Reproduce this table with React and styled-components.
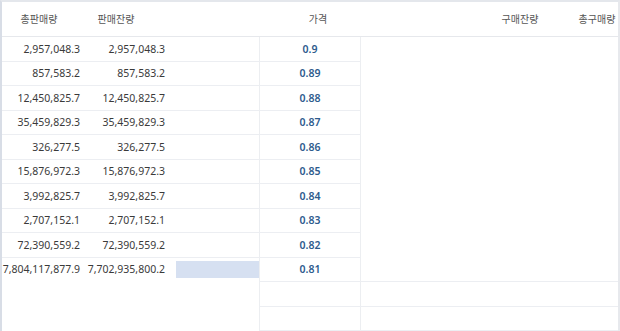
import React from "react";
import styled, { createGlobalStyle } from "styled-components";

const asks = [
  { total: 2957048.3, remain: 2957048.3, price: "0.9" },
  { total: 857583.2, remain: 857583.2, price: "0.89" },
  { total: 12450825.7, remain: 12450825.7, price: "0.88" },
  { total: 35459829.3, remain: 35459829.3, price: "0.87" },
  { total: 326277.5, remain: 326277.5, price: "0.86" },
  { total: 15876972.3, remain: 15876972.3, price: "0.85" },
  { total: 3992825.7, remain: 3992825.7, price: "0.84" },
  { total: 2707152.1, remain: 2707152.1, price: "0.83" },
  { total: 72390559.2, remain: 72390559.2, price: "0.82" },
  { total: 7804117877.9, remain: 7702935800.2, price: "0.81" },
];

const BAR_MAX = 83;

const fmt = (n) =>
  n.toLocaleString("en-US", { minimumFractionDigits: 1, maximumFractionDigits: 1 });

export default function App() {
  const maxRemain = Math.max(...asks.map((a) => a.remain));

  return (
    <>
      <GlobalStyle />
      <Board>
        <HeaderRow>
          <HeadCell>총판매량</HeadCell>
          <HeadCell>판매잔량</HeadCell>
          <HeadCell />
          <HeadCell>가격</HeadCell>
          <HeadCell />
          <HeadCell>구매잔량</HeadCell>
          <HeadCell>총구매량</HeadCell>
        </HeaderRow>

        {asks.map((a, i) => {
          const last = i === asks.length - 1;
          const barWidth = Math.round((a.remain / maxRemain) * BAR_MAX);
          return (
            <Row key={a.price}>
              <NumCell $line={!last}>{fmt(a.total)}</NumCell>
              <NumCell $line={!last}>{fmt(a.remain)}</NumCell>
              <BarCell $line={!last}>
                {barWidth > 1 && <Bar style={{ width: barWidth }} />}
              </BarCell>
              <PriceCell>{a.price}</PriceCell>
              <EmptyCell $line={last} />
              <EmptyCell $line={last} />
              <EmptyCell $line={last} />
            </Row>
          );
        })}

        {[0, 1].map((k) => (
          <Row key={`bid-${k}`}>
            <EmptyCell />
            <EmptyCell />
            <EmptyCell />
            <PriceCell />
            <EmptyCell $line />
            <EmptyCell $line />
            <EmptyCell $line />
          </Row>
        ))}
      </Board>
    </>
  );
}

const GlobalStyle = createGlobalStyle`
  * { box-sizing: border-box; }
  body {
    margin: 0;
    background: #ffffff;
    font-family: "Noto Sans", "Noto Sans CJK KR", sans-serif;
  }
`;

const Board = styled.div`
  width: 620px;
  height: 331px;
  overflow: hidden;
  background: #ffffff;
  border-top: 2px solid #e4e7ec;
  border-left: 2px solid #d8dde6;
  border-right: 2px solid #e7e9ed;
`;

const HeaderRow = styled.div`
  display: grid;
  grid-template-columns: 74px 80px 1fr 102px 1fr 80px 74px;
  width: 632px;
  height: 35px;
  align-items: center;
  border-bottom: 1px solid #e6e8ec;
`;

const HeadCell = styled.div`
  text-align: center;
  font-family: "Noto Sans CJK KR", "Noto Sans", sans-serif;
  font-size: 10px;
  color: #555555;
  padding-bottom: 1px;
`;

const Row = styled.div`
  display: grid;
  grid-template-columns: 83px 85px 89px 102px 89px 85px 1fr;
  height: 24.5px;
`;

const Cell = styled.div`
  height: 100%;
  display: flex;
  align-items: center;
  border-bottom: 1px solid ${(p) => (p.$line ? "#eceef2" : "transparent")};
`;

const NumCell = styled(Cell)`
  justify-content: flex-end;
  padding-right: 5px;
  font-size: 10.5px;
  color: #3a3a3a;
  white-space: nowrap;
`;

const BarCell = styled(Cell)`
  justify-content: flex-end;
`;

const Bar = styled.div`
  height: 17px;
  background: #d6e0f1;
`;

const PriceCell = styled(Cell)`
  justify-content: center;
  border-left: 1px solid #eceef1;
  border-right: 1px solid #eceef1;
  border-bottom: 1px solid #eceef2;
  font-size: 10.5px;
  font-weight: 600;
  color: #2e5b8d;
`;

const EmptyCell = styled(Cell)``;
